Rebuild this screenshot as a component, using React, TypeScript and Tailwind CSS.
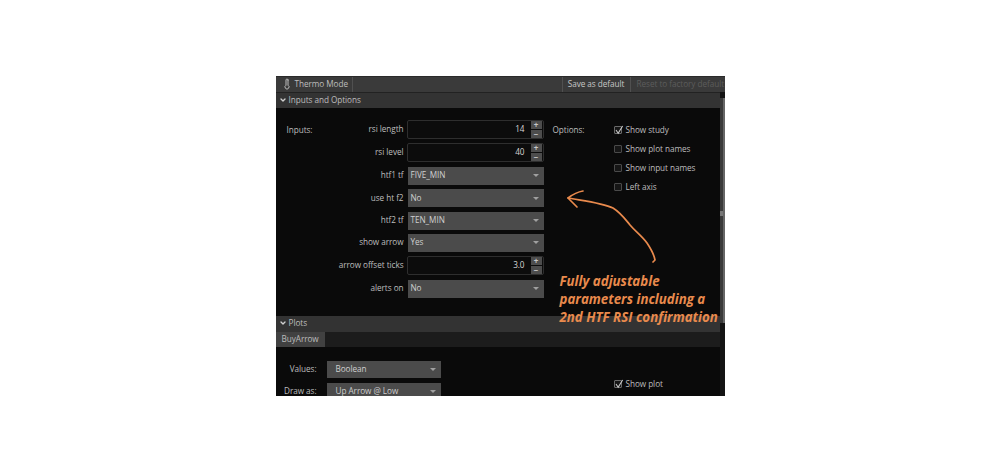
import { ChevronDown, Thermometer } from 'lucide-react';

function Caret() {
  return <span className="h-0 w-0 border-x-[3px] border-t-[3px] border-x-transparent border-t-[#a0a0a0]" />;
}

function NumberRow({ label, value }: { label: string; value: string }) {
  return (
    <div className="flex h-[19px] items-center">
      <span className="mb-[1px] w-[131px] pr-[3px] text-right">{label}</span>
      <div className="flex h-[19px] w-[137px] items-center justify-end rounded-[2px] border border-[#2e2e2e] bg-[#0c0c0c] pr-[1px]">
        <span className="mr-[6px] mb-[1px] text-[#d6d6d6]">{value}</span>
        <div className="flex flex-col gap-[1px]">
          <span className="flex h-[8px] w-[11px] items-center justify-center bg-[#4d4d4d] text-[8px] leading-none font-bold text-[#c8c8c8]">+</span>
          <span className="flex h-[8px] w-[11px] items-center justify-center bg-[#4d4d4d] text-[8px] leading-none font-bold text-[#c8c8c8]">−</span>
        </div>
      </div>
    </div>
  );
}

function SelectRow({ label, value }: { label: string; value: string }) {
  return (
    <div className="flex h-[18px] items-center">
      <span className="mb-[1px] w-[131px] pr-[3px] text-right">{label}</span>
      <div className="ml-[1px] flex h-[18px] w-[136px] items-center justify-between bg-[#4b4b4b] pr-[5px] pl-[3px] text-[#cfcfcf]">
        <span className="mb-[1px]">{value}</span>
        <Caret />
      </div>
    </div>
  );
}

function Check({ label, checked }: { label: string; checked?: boolean }) {
  return (
    <div className="flex h-[8px] items-center gap-[4px]">
      <span className={`relative h-[8px] w-[8px] rounded-[1px] border bg-[#161616] ${checked ? 'border-[#6a6a6a]' : 'border-[#4a4a4a]'}`}>
        {checked && (
          <svg viewBox="0 0 10 10" className="absolute -top-[2px] -left-[1px] h-[10px] w-[10px]">
            <path d="M2 5 L4.2 8.2 L8.6 1" fill="none" stroke="#c8c8c8" strokeWidth="1.1" />
          </svg>
        )}
      </span>
      <span>{label}</span>
    </div>
  );
}

export default function App() {
  return (
    <div className="flex h-[469px] w-[1000px] items-start justify-center bg-white pt-[76px] font-['Open_Sans',sans-serif] text-[8.2px] leading-none tracking-[-0.05px] whitespace-nowrap text-[#bdbdbd]">
      <div className="relative flex h-[320px] w-[449px] flex-col overflow-hidden border-t border-[#2a2a2a] bg-[#0a0a0a]">
        {/* title bar */}
        <div className="flex h-[15px] shrink-0 items-center justify-between bg-[#3a3a3a]">
          <div className="flex h-full w-[77px] items-center gap-[2px] border-r border-[#505050] pb-[1px] pl-[5px]">
            <Thermometer className="h-[12px] w-[12px] text-[#bbbbbb]" strokeWidth={2} />
            <span>Thermo Mode</span>
          </div>
          <div className="flex h-full items-center">
            <span className="flex h-full w-[69px] items-center justify-center border-x border-[#505050] pb-[1px] text-[#c6c6c6]">Save as default</span>
            <span className="w-[94px] pb-[1px] pl-[6px] text-[#5c5c5c]">Reset to factory default</span>
          </div>
        </div>

        <div className="flex min-h-0 flex-1">
          <div className="flex w-[444px] flex-col">
            {/* inputs section */}
            <div className="flex h-[16px] shrink-0 items-center gap-[2px] border-t border-[#222222] bg-[#333333] pb-[1px] pl-[3px]">
              <ChevronDown className="h-[8px] w-[8px] text-[#d0d0d0]" strokeWidth={4} />
              <span>Inputs and Options</span>
            </div>
            <div className="relative flex h-[208px] shrink-0 pt-[12px]">
              <span className="absolute top-[18px] left-[11px]">Inputs:</span>
              <div className="flex w-[268px] shrink-0 flex-col gap-[4.4px]">
                <NumberRow label="rsi length" value="14" />
                <NumberRow label="rsi level" value="40" />
                <SelectRow label="htf1 tf" value="FIVE_MIN" />
                <SelectRow label="use ht f2" value="No" />
                <SelectRow label="htf2 tf" value="TEN_MIN" />
                <SelectRow label="show arrow" value="Yes" />
                <NumberRow label="arrow offset ticks" value="3.0" />
                <SelectRow label="alerts on" value="No" />
              </div>
              <div className="ml-[9px] flex pt-[6px]">
                <span className="w-[61px]">Options:</span>
                <div className="flex flex-col gap-[11px]">
                  <Check label="Show study" checked />
                  <Check label="Show plot names" />
                  <Check label="Show input names" />
                  <Check label="Left axis" />
                </div>
              </div>
            </div>

            {/* plots section */}
            <div className="flex h-[16px] shrink-0 items-center gap-[2px] bg-[#333333] pb-[2px] pl-[3px]">
              <ChevronDown className="h-[8px] w-[8px] text-[#d0d0d0]" strokeWidth={4} />
              <span>Plots</span>
            </div>
            <div className="flex h-[15px] shrink-0 items-stretch bg-[#1c1c1c]">
              <span className="flex items-center bg-[#414141] px-[6px] pb-[1px]">BuyArrow</span>
            </div>
            <div className="flex flex-1 pt-[14px]">
              <div className="flex w-[165px] flex-col gap-[5px]">
                <div className="flex h-[17px] items-center">
                  <span className="w-[42px] pr-[1px] text-right">Values:</span>
                  <div className="ml-[9px] flex h-[17px] w-[114px] items-center justify-between bg-[#4b4b4b] pr-[5px] pl-[9px] text-[#cfcfcf]">
                    <span>Boolean</span>
                    <Caret />
                  </div>
                </div>
                <div className="flex h-[17px] items-center">
                  <span className="w-[42px] pr-[1px] text-right">Draw as:</span>
                  <div className="ml-[9px] flex h-[17px] w-[114px] items-center justify-between bg-[#4b4b4b] pr-[5px] pl-[9px] text-[#cfcfcf]">
                    <span>Up Arrow @ Low</span>
                    <Caret />
                  </div>
                </div>
              </div>
              <div className="ml-[173px] pt-[19px]">
                <Check label="Show plot" checked />
              </div>
            </div>
          </div>

          {/* scrollbar */}
          <div className="flex w-[5px] flex-col bg-[#141414]">
            <div className="mt-[6px] h-[225px] border-r-2 border-[#666666] bg-[#3a3a3a]">
              <div className="mt-[113px] h-[5px] bg-[#777777]" />
            </div>
          </div>
        </div>

        {/* hand-drawn annotation over the dialog */}
        <svg viewBox="0 0 100 80" className="absolute top-[113px] left-[289px] h-[80px] w-[100px]" fill="none" stroke="#e98a4d" strokeWidth="1.7" strokeLinecap="round" strokeLinejoin="round">
          <path d="M3 8 C20 11 38 13 48 18 C56 23 60 29 65 35 C71 42 77 46 82 53 C86 59 89 64 90 70 L88 72" />
          <path d="M18 1 C12 2 7 5 3 8 L12 17" />
        </svg>
        <div className="absolute top-[195px] left-[284px] text-[13.3px] leading-[18px] font-bold tracking-normal text-[#e98a4d] italic">
          <div>Fully adjustable</div>
          <div>parameters including a</div>
          <div>2nd HTF RSI confirmation</div>
        </div>
      </div>
    </div>
  );
}
